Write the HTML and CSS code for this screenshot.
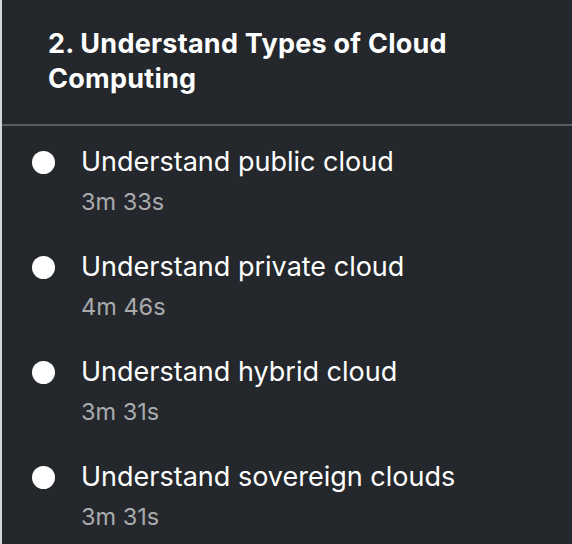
FILE: index.html
```html
<!DOCTYPE html>
<html lang="en">
<head>
  <meta charset="UTF-8" />
  <meta name="viewport" content="width=device-width, initial-scale=1.0" />
  <title>Course contents</title>
  <link rel="stylesheet" href="styles.css">
</head>
<body>
  <section class="section">
    <h2 class="section-title">2. Understand Types of Cloud Computing</h2>
    <ul class="lessons">
      <li class="lesson">
        <span class="dot"></span>
        <div class="lesson-info">
          <div class="lesson-name">Understand public cloud</div>
          <div class="lesson-time">3m 33s</div>
        </div>
      </li>
      <li class="lesson">
        <span class="dot"></span>
        <div class="lesson-info">
          <div class="lesson-name">Understand private cloud</div>
          <div class="lesson-time">4m 46s</div>
        </div>
      </li>
      <li class="lesson">
        <span class="dot"></span>
        <div class="lesson-info">
          <div class="lesson-name">Understand hybrid cloud</div>
          <div class="lesson-time">3m 31s</div>
        </div>
      </li>
      <li class="lesson">
        <span class="dot"></span>
        <div class="lesson-info">
          <div class="lesson-name">Understand sovereign clouds</div>
          <div class="lesson-time">3m 31s</div>
        </div>
      </li>
    </ul>
  </section>
</body>
</html>
```

FILE: styles.css
```css
html, body { margin: 0; padding: 0; height: 100%; }
body { background: #24282c; font-family: Inter, "Noto Sans", sans-serif; color: #fff; }

.section { border-left: 2px solid #d4d5d6; min-height: 100%; box-sizing: border-box; }
.section-title { margin: 0; padding: 26px 40px 28px 46px; font-size: 27px; font-weight: 700; line-height: 35px; letter-spacing: 0.25px; border-bottom: 2px solid #5a5d61; }

.lessons { list-style: none; margin: 0; padding: 19px 0 0 0; }
.lesson { display: flex; align-items: flex-start; height: 105px; }
.dot { width: 23px; height: 23px; border-radius: 50%; background: #fff; margin: 6px 26px 0 30px; flex-shrink: 0; }
.lesson-name { font-size: 27px; line-height: 34px; }
.lesson-time { font-size: 23.5px; line-height: 28px; margin-top: 9px; color: #a8aaac; }
```
